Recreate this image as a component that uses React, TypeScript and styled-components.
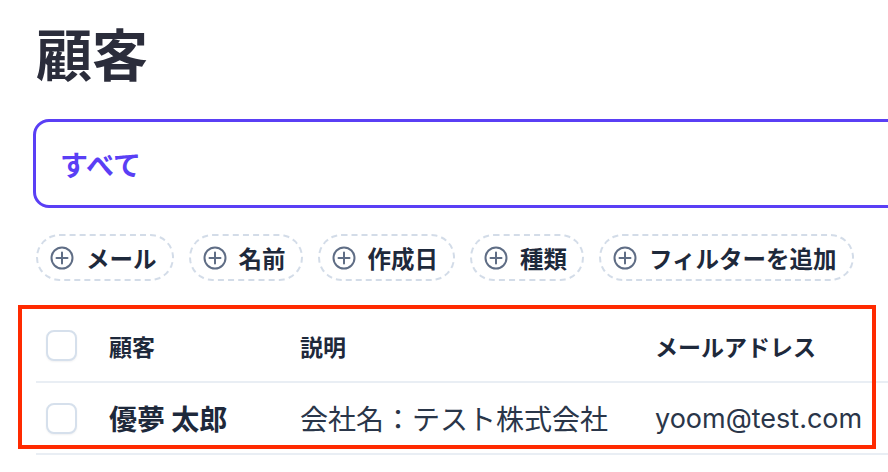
import styled, { createGlobalStyle } from "styled-components"

const GlobalStyle = createGlobalStyle`
  html, body {
    margin: 0;
    padding: 0;
    background: #ffffff;
    overflow: hidden;
  }
  body {
    font-family: "Inter", "Noto Sans CJK JP", sans-serif;
    color: #1e293b;
  }
`

const Page = styled.div`
  position: relative;
  width: 888px;
  height: 472px;
  overflow: hidden;
  padding: 18px 0 0 36px;
  box-sizing: border-box;
`

const Inner = styled.div`
  width: 1100px;
  display: flex;
  flex-direction: column;
`

const Title = styled.h1`
  margin: 0;
  font-family: "Noto Sans CJK JP", sans-serif;
  font-size: 56px;
  line-height: 68px;
  font-weight: 700;
  color: #2b2d3b;
`

const TabBox = styled.div`
  margin: 33px 0 0 -3px;
  height: 89px;
  box-sizing: border-box;
  border: 3px solid #5a3ff5;
  border-radius: 16px;
  display: flex;
  align-items: center;
  padding-left: 24px;
`

const Tab = styled.span`
  font-family: "Noto Sans CJK JP", sans-serif;
  font-size: 28px;
  font-weight: 700;
  color: #5a3ff5;
`

const ChipRow = styled.div`
  display: flex;
  gap: 15px;
  margin-top: 26px;
`

const Chip = styled.div`
  display: flex;
  align-items: center;
  gap: 12px;
  height: 47px;
  box-sizing: border-box;
  padding: 0 15px 0 12px;
  border: 2px dashed #d3dce8;
  border-radius: 999px;
  font-family: "Noto Sans CJK JP", sans-serif;
  font-size: 23.5px;
  font-weight: 700;
  color: #1e293b;
  white-space: nowrap;
`

const Table = styled.div`
  margin-top: 29px;
  display: flex;
  flex-direction: column;
`

const Row = styled.div<{ $h: number }>`
  display: grid;
  grid-template-columns: 73px 191px 355px 1fr;
  align-items: center;
  height: ${(p) => p.$h}px;
  border-bottom: 2px solid #e9eef4;
  box-sizing: border-box;
`

const CheckCell = styled.div`
  padding-left: 10px;
  display: flex;
  align-items: center;
`

const Check = styled.div`
  width: 31px;
  height: 31px;
  box-sizing: border-box;
  border: 2px solid #d6e0ec;
  border-radius: 8px;
  background: #fff;
  box-shadow: 0 1px 2px rgba(15, 23, 42, 0.06);
`

const HeadCell = styled.div`
  font-family: "Noto Sans CJK JP", sans-serif;
  font-size: 23px;
  font-weight: 700;
  color: #1e293b;
  white-space: nowrap;
`

const Cell = styled.div<{ $bold?: boolean; $latin?: boolean }>`
  font-family: ${(p) =>
    p.$latin ? '"Inter", "Noto Sans CJK JP", sans-serif' : '"Noto Sans CJK JP", sans-serif'};
  font-size: ${(p) => (p.$latin ? 27 : 28)}px;
  font-weight: ${(p) => (p.$bold ? 700 : 400)};
  color: ${(p) => (p.$bold ? "#1e293b" : "#2a3649")};
  white-space: nowrap;
`

const Highlight = styled.div`
  position: absolute;
  left: 18px;
  top: 305px;
  width: 858px;
  height: 144px;
  box-sizing: border-box;
  border: 4px solid #ff2a00;
  pointer-events: none;
`

const PlusCircle = () => (
  <svg width="24" height="24" viewBox="0 0 24 24" fill="none" stroke="#5f6d85" strokeWidth="2" strokeLinecap="round">
    <circle cx="12" cy="12" r="10.5" />
    <path d="M12 6.5v11M6.5 12h11" />
  </svg>
)

const filters = ["メール", "名前", "作成日", "種類", "フィルターを追加"]

export default function App() {
  return (
    <>
      <GlobalStyle />
      <Page>
        <Inner>
          <Title>顧客</Title>
          <TabBox>
            <Tab>すべて</Tab>
          </TabBox>
          <ChipRow>
            {filters.map((f) => (
              <Chip key={f}>
                <PlusCircle />
                {f}
              </Chip>
            ))}
          </ChipRow>
          <Table>
            <Row $h={73}>
              <CheckCell>
                <Check />
              </CheckCell>
              <HeadCell>顧客</HeadCell>
              <HeadCell>説明</HeadCell>
              <HeadCell>メールアドレス</HeadCell>
            </Row>
            <Row $h={72}>
              <CheckCell>
                <Check />
              </CheckCell>
              <Cell $bold>優夢 太郎</Cell>
              <Cell>会社名：テスト株式会社</Cell>
              <Cell $latin>yoom@test.com</Cell>
            </Row>
          </Table>
        </Inner>
        <Highlight />
      </Page>
    </>
  )
}
